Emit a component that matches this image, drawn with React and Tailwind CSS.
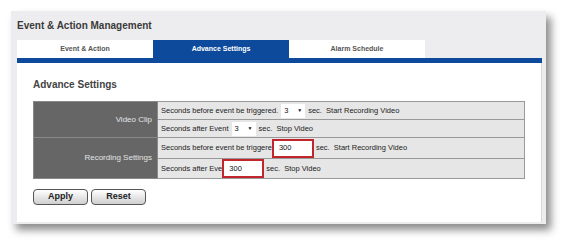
import React from 'react';

const tabs = [
  { label: 'Event & Action', active: false },
  { label: 'Advance Settings', active: true },
  { label: 'Alarm Schedule', active: false },
];

const SelectBox = ({ value }) => (
  <span className="inline-flex items-center justify-between w-[24px] h-[14px] bg-white px-[3px] mx-[3px] text-[#111]">
    <span>{value}</span>
    <span className="text-[5px] leading-none">▼</span>
  </span>
);

const NumberBox = ({ value }) => (
  <span className="inline-flex items-center w-[42px] h-[19px] bg-white border-2 border-[#c1262c] pl-[5px] text-[#111] -mr-[2px]">
    {value}
  </span>
);

const App = () => {
  return (
    <div className="w-[571px] h-[250px] bg-white pt-[11px] pl-[11px] font-['Liberation_Sans',Arial,sans-serif]">
      <div className="w-[535px] h-[213px] bg-[#ededef] shadow-[5px_6px_8px_rgba(0,0,0,0.45)] pl-[6px] pr-[4px] pb-[2px] flex flex-col">
        <div className="h-[29px] flex items-center text-[10px] font-bold text-[#3a3a3a]">
          Event &amp; Action Management
        </div>

        <div className="flex h-[18px]">
          {tabs.map((tab) => (
            <div
              key={tab.label}
              className={`w-[136px] flex items-center justify-center text-[7px] font-bold ${
                tab.active ? 'bg-[#0d4a9b] text-white' : 'bg-white text-[#555]'
              }`}
            >
              {tab.label}
            </div>
          ))}
        </div>
        <div className="h-[5px] bg-[#0d4a9b]" />

        <div className="flex-1 bg-white border-r border-[#d8d8d8] px-[16px]">
          <h3 className="pt-[16px] h-[38px] text-[10px] font-bold text-[#444] leading-[12px]">
            Advance Settings
          </h3>

          <table className="w-[492px] border-collapse text-[7.5px] text-[#222]">
            <tbody>
              <tr className="h-[18px]">
                <td rowSpan={2} className="w-[124px] bg-[#666] text-right pr-[5px] text-[#e4e4e4] text-[8px] border border-[#888]">
                  Video Clip
                </td>
                <td className="bg-[#e6e6e6] border border-[#999] pl-[3px]">
                  <span className="inline-flex items-center">
                    Seconds before event be triggered.
                    <SelectBox value="3" />
                    sec.&nbsp;&nbsp;Start Recording Video
                  </span>
                </td>
              </tr>
              <tr className="h-[18px]">
                <td className="bg-[#e6e6e6] border border-[#999] pl-[3px]">
                  <span className="inline-flex items-center">
                    Seconds after Event
                    <SelectBox value="3" />
                    sec.&nbsp;&nbsp;Stop Video
                  </span>
                </td>
              </tr>
              <tr className="h-[21px]">
                <td rowSpan={2} className="bg-[#666] text-right pr-[5px] text-[#e4e4e4] text-[8px] border border-[#888]">
                  Recording Settings
                </td>
                <td className="bg-[#e6e6e6] border border-[#999] pl-[3px]">
                  <span className="inline-flex items-center">
                    Seconds before event be triggere
                    <NumberBox value="300" />
                    <span className="ml-[4px]">sec.&nbsp;&nbsp;Start Recording Video</span>
                  </span>
                </td>
              </tr>
              <tr className="h-[20px]">
                <td className="bg-[#e6e6e6] border border-[#999] pl-[3px]">
                  <span className="inline-flex items-center">
                    Seconds after Eve
                    <NumberBox value="300" />
                    <span className="ml-[4px]">sec.&nbsp;&nbsp;Stop Video</span>
                  </span>
                </td>
              </tr>
            </tbody>
          </table>

          <div className="flex gap-[3px] mt-[10px]">
            <button className="w-[55px] h-[16px] rounded-[4px] border border-[#555] bg-gradient-to-b from-white to-[#cfcfcf] text-[9px] font-bold text-[#222]">
              Apply
            </button>
            <button className="w-[55px] h-[16px] rounded-[4px] border border-[#555] bg-gradient-to-b from-white to-[#cfcfcf] text-[9px] font-bold text-[#222]">
              Reset
            </button>
          </div>
        </div>
      </div>
    </div>
  );
};

export default App;
